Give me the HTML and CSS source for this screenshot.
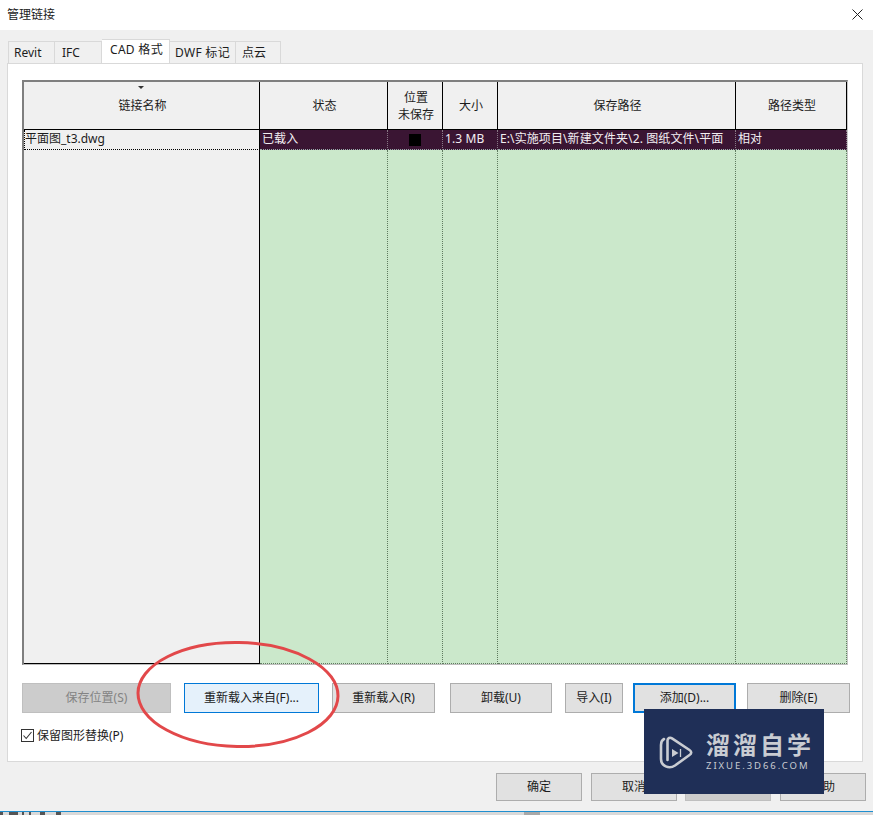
FILE: index.html
```html
<!DOCTYPE html>
<html lang="zh-CN">
<head>
	<meta charset="UTF-8">
	<title>管理链接</title>
	<link rel="stylesheet" href="styles.css">
</head>
<body>
	<div class="dialog">
		<div class="titleBar">
			<span>管理链接</span>
			<svg class="closeIcon" width="11" height="11" viewBox="0 0 11 11"><path d="M0.5 0.5L10.5 10.5M10.5 0.5L0.5 10.5" stroke="#222" fill="none"/></svg>
		</div>

		<div class="content">
			<ul class="tabs">
				<li>Revit</li>
				<li>IFC</li>
				<li class="active">CAD 格式</li>
				<li>DWF 标记</li>
				<li>点云</li>
			</ul>

			<div class="panel">
				<div class="grid">
					<div class="head"><i class="sortMark"></i>链接名称</div>
					<div class="head">状态</div>
					<div class="head">位置<br>未保存</div>
					<div class="head">大小</div>
					<div class="head">保存路径</div>
					<div class="head">路径类型</div>

					<div class="nameCell">平面图_t3.dwg</div>
					<div class="cell">已载入</div>
					<div class="cell center"><i class="blackBox"></i></div>
					<div class="cell">1.3 MB</div>
					<div class="cell">E:\实施项目\新建文件夹\2. 图纸文件\平面</div>
					<div class="cell">相对</div>

					<div class="emptyName"></div>
					<div class="empty"></div>
					<div class="empty"></div>
					<div class="empty"></div>
					<div class="empty"></div>
					<div class="empty"></div>
				</div>

				<div class="actions">
					<button class="btn disabled saveBtn">保存位置(S)</button>
					<button class="btn hot fromBtn">重新载入来自(F)...</button>
					<button class="btn reloadBtn">重新载入(R)</button>
					<button class="btn unloadBtn">卸载(U)</button>
					<button class="btn importBtn">导入(I)</button>
					<button class="btn focus addBtn">添加(D)...</button>
					<button class="btn delBtn">删除(E)</button>
				</div>

				<label class="keep">
					<span class="checkBox">
						<svg width="13" height="13" viewBox="0 0 13 13"><path d="M2.5 6.500L5.200 9.500L10.500 3" stroke="#333" stroke-width="1.100" fill="none"/></svg>
					</span>
					保留图形替换(P)
				</label>
			</div>

			<div class="footer">
				<button class="btn footBtn">确定</button>
				<button class="btn footBtn">取消</button>
				<button class="btn footBtn disabled applyBtn"></button>
				<button class="btn footBtn">帮助</button>
			</div>
		</div>

		<div class="taskStrip">
			<svg class="stripBits" width="600" height="3" viewBox="0 0 600 3">
				<path d="M0 0h3v3h-3zM9 0h9v3h-9zM22 0h2v3h-2zM29 0h2v3h-2zM40 0h5v3h-5zM56 0h5v3h-5z" fill="#555"/>
				<path d="M524 0h16v3h-16z" fill="#a8a8a8"/>
			</svg>
		</div>
	</div>

	<svg class="redRing" width="210" height="114" viewBox="0 0 210 114">
		<ellipse cx="105" cy="56.500" rx="100" ry="52" transform="rotate(1 105 56.500)" fill="none" stroke="#e2484a" stroke-width="3"/>
	</svg>

	<div class="mark">
		<svg class="markLogo" width="36" height="38" viewBox="0 0 36 38">
			<path d="M8.500 26V6.500C8.500 4 11 3 13 4.300L30.500 16C32.800 17.500 32.800 19.500 30.500 21L16 31.500C10 35.500 2 32 2 25V11C2 8.500 3 6 5 5" stroke="#c9ccd2" stroke-width="2.600" fill="none" stroke-linecap="round"/>
			<path d="M13 15L19.500 19L13 23Z" fill="#c9ccd2"/>
			<path d="M21.500 15V23" stroke="#c9ccd2" stroke-width="1.300"/>
		</svg>
		<div class="markText">
			<div class="markCn">溜溜自学</div>
			<div class="markEn">ZIXUE.3D66.COM</div>
		</div>
	</div>
</body>
</html>
```

FILE: styles.css
```css
*{
	margin: 0;
	padding: 0;
	list-style: none;
	box-sizing: border-box;
}
html, body{
	width: 873px;
	height: 815px;
	overflow: hidden;
}
body{
	position: relative;
	background: #f0f0f0;
	color: #1c1c1c;
	font: 12px/16px "Noto Sans", "Noto Sans CJK SC", sans-serif;
}
button{
	font: inherit;
	color: inherit;
}

.dialog{
	height: 815px;
	display: flex;
	flex-direction: column;
}
.titleBar{
	height: 30px;
	flex: none;
	background: #fff;
	padding: 7px 10px 0 7px;
	display: flex;
	justify-content: space-between;
}
.closeIcon{
	margin-top: 2px;
}

.content{
	flex: 1;
	padding: 11px 10px 0 7px;
}

.tabs{
	height: 22px;
	display: flex;
	padding-left: 1px;
	position: relative;
	z-index: 1;
}
.tabs li{
	height: 22px;
	padding: 3px 0 0 6px;
	background: #f0f0f0;
	border: 1px solid #d9d9d9;
	border-bottom: none;
	border-left: none;
	white-space: nowrap;
}
.tabs li:nth-child(1){
	width: 47px;
	padding-left: 5px;
	border-left: 1px solid #d9d9d9;
}
.tabs li:nth-child(2){
	width: 47px;
	padding-left: 7px;
}
.tabs li.active{
	width: 68px;
	height: 24px;
	margin-top: -2px;
	background: #fff;
	padding: 2px 0 0 8px;
	letter-spacing: 0.3px;
}
.tabs li:nth-child(4){
	width: 66px;
	padding-left: 5px;
	letter-spacing: 0.3px;
}
.tabs li:nth-child(5){
	width: 45px;
}

.panel{
	height: 699px;
	background: #fff;
	border: 1px solid #d9d9d9;
	padding: 16px 14px 0;
}

.grid{
	width: 826px;
	height: 585px;
	display: grid;
	grid-template-columns: 236px 128px 55px 55px 238px 111px;
	grid-template-rows: 48px 20px 1fr;
	border-top: 2px solid #7f7f7f;
	border-left: 2px solid #7f7f7f;
	border-right: 1px solid #c8c8c8;
	border-bottom: 1px solid #bdbdbd;
}
.head{
	background: #f0f0f0;
	border-right: 1px solid #000;
	border-bottom: 1px solid #000;
	display: flex;
	align-items: center;
	justify-content: center;
	text-align: center;
	line-height: 17px;
	padding-left: 2px;
	position: relative;
}
.sortMark{
	position: absolute;
	top: 4px;
	left: 114px;
	border-left: 3px solid transparent;
	border-right: 3px solid transparent;
	border-top: 3px solid #333;
}
.nameCell{
	background: #f0f0f0;
	border: 1px dotted #000;
	border-top: none;
	border-right: 1px solid #000;
	line-height: 18px;
}
.cell{
	background: #3a1533;
	color: #f2eef2;
	border-right: 1px dotted #8a7a88;
	border-bottom: 1px dotted #9aa;
	padding: 0 2px;
	line-height: 18px;
	letter-spacing: 0.1px;
	white-space: nowrap;
	overflow: hidden;
}
.center{
	display: flex;
	align-items: center;
	justify-content: center;
}
.blackBox{
	display: block;
	width: 12px;
	height: 12px;
	background: #000;
}
.emptyName{
	background: #f0f0f0;
	border-right: 1px solid #000;
	border-bottom: 1px solid #000;
}
.empty{
	background: #cbe8cb;
	border-right: 1px dotted #5f7a5f;
	border-bottom: 1px dotted #5f7a5f;
}

.actions{
	display: flex;
	margin-top: 18px;
}
.btn{
	height: 30px;
	background: #e1e1e1;
	border: 1px solid #adadad;
	display: block;
	flex: none;
}
.btn.disabled{
	background: #cccccc;
	border-color: #bfbfbf;
	color: #838383;
}
.btn.hot{
	background: #e5f1fb;
	border-color: #0078d7;
}
.btn.focus{
	border: 2px solid #0078d7;
}
.saveBtn{ width: 149px; }
.fromBtn{ width: 135px; margin-left: 13px; }
.reloadBtn{ width: 103px; margin-left: 13px; }
.unloadBtn{ width: 102px; margin-left: 15px; }
.importBtn{ width: 58px; margin-left: 13px; }
.addBtn{ width: 103px; margin-left: 10px; }
.delBtn{ width: 103px; margin-left: 11px; }

.keep{
	display: flex;
	align-items: center;
	gap: 3px;
	margin: 16px 0 0 -1px;
	height: 13px;
}
.checkBox{
	width: 13px;
	height: 13px;
	background: #fff;
	border: 1px solid #333;
	display: block;
}
.checkBox svg{
	display: block;
	margin: -1px;
}

.footer{
	display: flex;
	justify-content: flex-end;
	gap: 9px;
	margin: 11px -3px 0 0;
}
.footBtn{
	width: 86px;
	height: 28px;
}
.applyBtn{
	margin-left: -1px;
}

.taskStrip{
	height: 4px;
	flex: none;
	background: #d9d9d9;
	border-top: 1px solid #1f8fd0;
}
.stripBits{
	display: block;
}

/* overlays */
.redRing{
	position: absolute;
	left: 133px;
	top: 638px;
}
.mark{
	position: absolute;
	left: 644px;
	top: 709px;
	width: 180px;
	height: 85px;
	background: #1f2f57;
	display: flex;
	align-items: center;
	padding-left: 15px;
	gap: 11px;
	color: #c9ccd2;
}
.markLogo{
	margin-top: 2px;
}
.markCn{
	font-size: 24px;
	line-height: 26px;
	font-weight: 700;
	letter-spacing: 3px;
	white-space: nowrap;
}
.markEn{
	font-size: 9.500px;
	line-height: 12px;
	letter-spacing: 1.950px;
	margin-top: 2px;
	white-space: nowrap;
}
```
